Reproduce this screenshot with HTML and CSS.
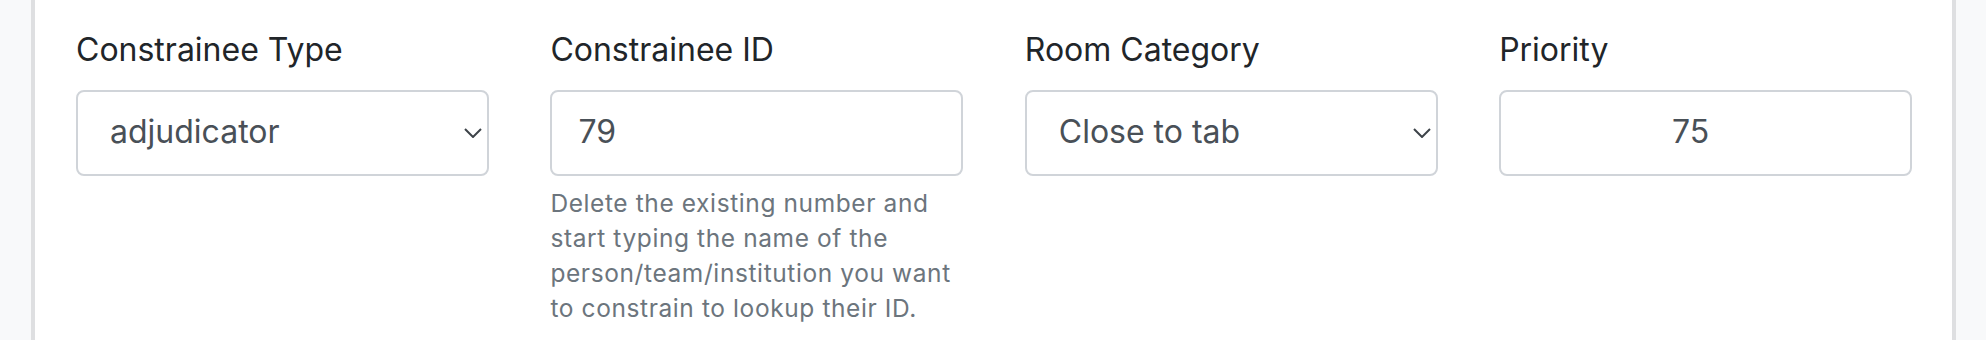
FILE: index.html
```html
<!DOCTYPE html>
<html lang="en">
<head>
<meta charset="utf-8">
<title>Room constraint</title>
<link rel="stylesheet" href="styles.css">
</head>
<body>
<div class="page">
  <div class="card">
    <form class="fields">
      <div class="field">
        <label class="field-label" for="ctype">Constrainee Type</label>
        <div class="select-wrap">
          <select id="ctype" class="control select">
            <option>adjudicator</option>
            <option>team</option>
            <option>institution</option>
          </select>
          <svg class="chevron" viewBox="0 0 18 10" aria-hidden="true"><path d="M1 1 L9 9 L17 1"/></svg>
        </div>
      </div>
      <div class="field">
        <label class="field-label" for="cid">Constrainee ID</label>
        <input id="cid" class="control" type="text" value="79">
        <p class="help">Delete the existing number and start typing the name of the person/team/institution you want to constrain to lookup their ID.</p>
      </div>
      <div class="field">
        <label class="field-label" for="rcat">Room Category</label>
        <div class="select-wrap">
          <select id="rcat" class="control select">
            <option>Close to tab</option>
          </select>
          <svg class="chevron" viewBox="0 0 18 10" aria-hidden="true"><path d="M1 1 L9 9 L17 1"/></svg>
        </div>
      </div>
      <div class="field">
        <label class="field-label" for="prio">Priority</label>
        <input id="prio" class="control number" type="text" inputmode="numeric" value="75">
      </div>
    </form>
  </div>
</div>
</body>
</html>
```
FILE: styles.css
```css
* { box-sizing: border-box; }

html, body {
  margin: 0;
  padding: 0;
  height: 340px;
  overflow: hidden;
}

body {
  font-family: Inter, "Noto Sans", sans-serif;
  background: #f8f9fa;
}

.page {
  padding: 0 30px 0 31px;
  height: 340px;
}

.card {
  background: #ffffff;
  border-left: 4px solid #dedfe1;
  border-right: 4px solid #dedfe1;
  height: 340px;
  padding: 25px 40px 0 41px;
}

.fields {
  display: grid;
  grid-template-columns: repeat(4, 1fr);
  column-gap: 61.5px;
  margin: 0;
}

.field {
  display: flex;
  flex-direction: column;
}

.field-label {
  font-size: 32px;
  line-height: 50px;
  color: #212529;
  margin-bottom: 15px;
}

.select-wrap {
  position: relative;
}

.control {
  display: block;
  width: 100%;
  height: 86px;
  font-family: Inter, "Noto Sans", sans-serif;
  font-size: 32px;
  color: #495057;
  background: #ffffff;
  border: 2px solid #d0d4d9;
  border-radius: 8px;
  padding: 0 26px 3px 26px;
  outline: none;
}

.select {
  -webkit-appearance: none;
  appearance: none;
  padding: 0 56px 3px 32px;
}

.chevron {
  position: absolute;
  right: 7px;
  top: 38px;
  width: 18px;
  height: 10px;
  fill: none;
  stroke: #3d4349;
  stroke-width: 2;
  pointer-events: none;
}

.number {
  text-align: center;
  padding-right: 56px;
}

.help {
  margin: 10px 0 0 0;
  font-size: 24.5px;
  letter-spacing: 0.6px;
  line-height: 35px;
  color: #6c757d;
}
```
